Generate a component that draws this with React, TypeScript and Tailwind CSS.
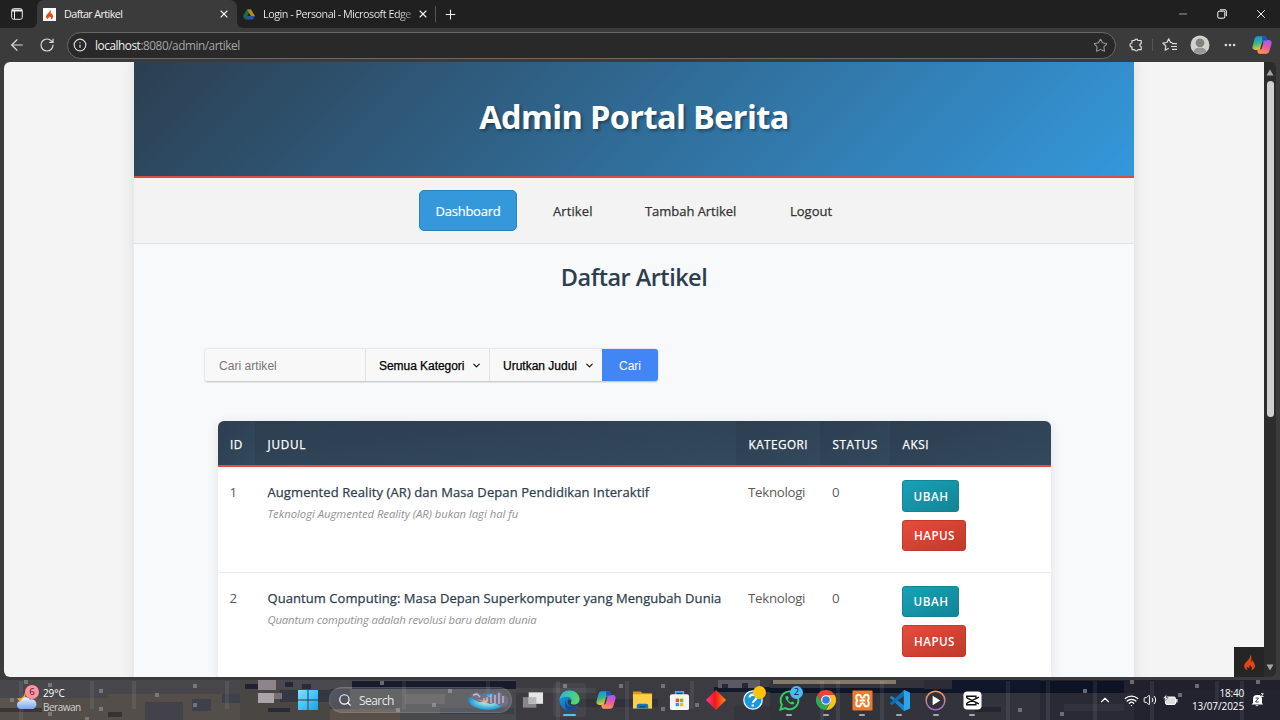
import React from "react";
import { ArrowLeft, RotateCw, Info, Star, Ellipsis, X, Plus, Minus, ChevronDown, ChevronUp, Wifi, Volume2, Search } from "lucide-react";

const UI = "font-['Open_Sans','Noto_Sans',sans-serif]";

function Flame({ className }: { className: string }) {
  return (
    <svg viewBox="0 0 24 24" className={className} fill="#dd4814">
      <path d="M12.5 1c1 3-.3 5-2.4 7.300C7.600 11 4.500 13.200 4.500 17c0 3 2 5.200 5.200 6-1.800-1.700-2-3.700-.8-5.300.3 1.400 1 2 1.900 2.100 1.700-.4.8-2.800 1.900-4.800.3 2 2.900 2.600 2.900 5 0 1.200-.5 2.200-1.500 3 3.600-.7 5.700-3.200 5.700-6.400 0-3.600-2.600-5-3-8.200-.9.9-1.200 1.900-1 3.100-.8-.4-1.300-1.200-1.200-2.300.2-3.200.8-5.900-2.100-8.200z" />
    </svg>
  );
}

function Drive() {
  return (
    <svg viewBox="0 0 24 22" className="h-[11px] w-3">
      <path d="M8 1h8l-8 14-4 6L0 14z" fill="#1a6e3f" />
      <path d="M8 1h8l8 13h-8z" fill="#b98b16" />
      <path d="M4 21l4-7h16l-4 7z" fill="#2a54a2" />
    </svg>
  );
}

function Copilot({ id, className }: { id: string; className: string }) {
  return (
    <svg viewBox="0 0 24 24" className={className}>
      <defs>
        <linearGradient id={id + "a"} x1="0" y1="0" x2=".3" y2="1">
          <stop offset="0" stopColor="#1a8df0" />
          <stop offset=".55" stopColor="#35b58a" />
          <stop offset="1" stopColor="#f2c52c" />
        </linearGradient>
        <linearGradient id={id + "b"} x1=".6" y1="0" x2=".3" y2="1">
          <stop offset="0" stopColor="#a05cf0" />
          <stop offset=".5" stopColor="#ee5a9c" />
          <stop offset="1" stopColor="#ff9a4a" />
        </linearGradient>
      </defs>
      <path d="M7 1.500h8c1.500 0 2 1 2.500 3l.5 2.500h-2.500c-1.500 0-2.200.7-2.600 2l-1.900 6.500c-.5 1.500-1.300 2.500-3 2.500H4c-3 0-4-2-3.300-4.700L3 5C3.700 2.500 5 1.500 7 1.500z" fill={"url(#" + id + "a)"} />
      <path d="M17 22.500H9c-1.500 0-2-1-2.500-3L6 17.500h2.500c1.500 0 2.700-.7 3.100-2l1.900-7c.5-1.500 1.300-2.500 3-2.500H20c3 0 4 2 3.300 4.700L21 19c-.7 2.500-2 3.500-4 3.500z" fill={"url(#" + id + "b)"} />
      <path d="M12 1.500h3c1.500 0 2 1 2.500 3l.5 2h-3c-1.500 0-2.200.7-2.600 2z" fill="#1d50c8" />
      <path d="M13.500 8.500l-1.900 7c-.3 1-1 1.700-2 2l2.700-9.500z" fill="#2c2a35" />
    </svg>
  );
}

function TabBar() {
  return (
    <div className="flex h-7 w-full bg-[#3b3b3b] text-[#f2f2f2]">
      <div className="flex w-[37px] items-center rounded-br-[6px] bg-[#202020] pl-[11px]">
        <svg viewBox="0 0 12 12" className="h-3 w-3" fill="none" stroke="#eee">
          <rect x=".7" y=".7" width="10.600" height="10.600" rx="2" />
          <path d="M1 2.500h10" strokeWidth="2" />
          <path d="M3.500 3v8" />
        </svg>
      </div>
      <div className="w-[200px] bg-[#202020]">
        <div className="flex h-7 items-center rounded-t-[7px] bg-[#3b3b3b] pl-1.5">
          <div className="flex h-[13px] w-[13px] items-center justify-center bg-white">
            <Flame className="h-[11px] w-[11px]" />
          </div>
          <span className="ml-2 w-[148px] text-[10.800px] leading-4 tracking-[-0.6px]">Daftar Artikel</span>
          <X className="ml-1.5 h-[12px] w-[12px]" strokeWidth={2.200} />
        </div>
      </div>
      <div className="flex flex-1 items-center rounded-bl-[6px] bg-[#202020] pl-1.5">
        <Drive />
        <span className="ml-2 w-[149px] whitespace-nowrap bg-gradient-to-r from-[#f2f2f2] from-90% to-[#777] bg-clip-text text-[10.800px] leading-4 tracking-[-0.5px] text-transparent">
          Login - Personal - Microsoft Edge
        </span>
        <X className="ml-[5px] h-[12px] w-[12px]" strokeWidth={2.200} />
        <div className="ml-[6px] h-4 w-px bg-[#555]" />
        <Plus className="ml-[7px] h-[15px] w-[15px]" strokeWidth={1.700} />
        <div className="ml-auto flex items-center pr-3">
          <Minus className="h-3 w-3 text-[#ccc]" strokeWidth={1.500} />
          <svg viewBox="0 0 10 10" className="ml-[28px] h-[10px] w-[10px]" fill="none" stroke="#fff">
            <rect x=".8" y="2.200" width="7" height="7" rx="1.300" />
            <path d="M3 .8h5a1.300 1.300 0 0 1 1.300 1.300v5" />
          </svg>
          <X className="ml-[27px] h-[14px] w-[14px]" strokeWidth={1.700} />
        </div>
      </div>
    </div>
  );
}

function Toolbar() {
  return (
    <div className="flex h-[34px] w-full items-center bg-[#3b3b3b] pl-2 text-[#ddd]">
      <ArrowLeft className="h-[18px] w-[18px]" strokeWidth={1.500} />
      <RotateCw className="ml-[13px] h-[16px] w-[16px]" strokeWidth={1.700} />
      <div className="ml-[12px] flex h-[27px] w-[1049px] items-center rounded-full border border-[#696969] bg-[#292929] pl-[5px] pr-[7px]">
        <Info className="h-[14px] w-[14px]" strokeWidth={2} />
        <span className="ml-[8px] text-[11.800px] leading-4 tracking-[-0.45px] text-[#a6a6a6]"><span className="text-[#f0f0f0]">localhost</span>:8080/admin/artikel</span>
        <Star className="ml-auto h-[15px] w-[15px] text-[#999]" strokeWidth={1.700} />
      </div>
      <svg viewBox="0 0 14 14" className="ml-[13px] h-[14px] w-[14px]" fill="none" stroke="#ddd" strokeWidth="1.200" strokeLinejoin="round">
        <path d="M3 5V2.500h2.600a1.700 1.700 0 0 1 3.300 0h3.300v3.200a1.400 1.400 0 0 0 0 2.800v3.200H8.900a1.700 1.700 0 0 1-3.300 0H3V8.900a1.900 1.900 0 0 1 0-3.900z" />
      </svg>
      <div className="ml-[9px] h-3 w-px bg-[#555]" />
      <svg viewBox="0 0 16 14" className="ml-[9px] h-[14px] w-4" fill="none" stroke="#ddd" strokeWidth="1.200">
        <path d="M10.500 4.700L8.500 4.500 6.700.8 4.900 4.500.8 5.100l3 2.900-.7 4.200 3.600-2M10 5.700h5M9 8.500h6M10 11.300h5" strokeLinejoin="round" />
      </svg>
      <svg viewBox="0 0 20 20" className="ml-3 h-5 w-5">
        <circle cx="10" cy="10" r="9.500" fill="#d4d2cf" />
        <circle cx="10" cy="7.800" r="4.400" fill="#858280" />
        <path d="M3.500 16.500C5 13 7 12.700 10 12.700s5 .3 6.500 3.800A9.500 9.500 0 0 1 3.500 16.500z" fill="#9a9794" />
      </svg>
      <Ellipsis className="ml-[13px] h-[14px] w-[14px]" strokeWidth={2.500} />
      <Copilot id="tb" className="ml-[15px] h-5 w-5" />
    </div>
  );
}

const COLS = "grid grid-cols-[37.500px_481px_84px_70px_160.500px]";

function HeadCell({ label, track }: { label: string; track: string }) {
  return (
    <div className={"flex items-center bg-gradient-to-br from-[#2c3e50] to-[#34495e] pl-[12.500px] pt-px text-[11.700px] font-medium leading-4 text-white [-webkit-text-stroke:0.25px_white] " + track}>{label}</div>
  );
}

const rows = [
  { id: 1, title: "Augmented Reality (AR) dan Masa Depan Pendidikan Interaktif", text: "Teknologi Augmented Reality (AR) bukan lagi hal fu", tt: "tracking-[0.09px]", st: "tracking-[-0.03px]" },
  { id: 2, title: "Quantum Computing: Masa Depan Superkomputer yang Mengubah Dunia", text: "Quantum computing adalah revolusi baru dalam dunia", tt: "tracking-[0.07px]", st: "tracking-[-0.16px]" },
];

function Row({ r }: { r: (typeof rows)[number] }) {
  return (
    <div className={COLS + " h-[105.500px] border-b border-[#e9ecef] bg-white pt-[13px] text-[13.300px] text-[#5b5b5b]"}>
      <div className="pl-3 leading-6">{r.id}</div>
      <div className="whitespace-nowrap pl-[12.500px]">
        <div className={"text-[13px] font-medium leading-6 text-[#2c3e50] [-webkit-text-stroke:0.25px_#2c3e50] " + r.tt}>{r.title}</div>
        <div className={"text-[11.300px] italic leading-5 text-[#929292] " + r.st}>{r.text}</div>
      </div>
      <div className="pl-3 leading-6 tracking-[-0.3px]">Teknologi</div>
      <div className="pl-3 leading-6">0</div>
      <div className="flex flex-col items-start gap-2 pl-[12px] text-[11.700px] font-semibold text-white">
        <div className="flex h-[31.500px] w-[57px] items-center justify-center rounded-[3px] border border-[#138496] bg-gradient-to-br from-[#17a2b8] to-[#138496] pl-px pt-0.5 tracking-[0.55px]">UBAH</div>
        <div className="flex h-[31.500px] w-16 items-center justify-center rounded-[3px] border border-[#c0392b] bg-gradient-to-br from-[#e74c3c] to-[#c0392b] pl-px pt-0.5 tracking-[0.4px]">HAPUS</div>
      </div>
    </div>
  );
}

function Page() {
  return (
    <div className="flex h-[615px] min-w-0 flex-1 justify-center overflow-hidden bg-[#f4f4f4]">
      <div className="flex h-[640px] w-[1000px] shrink-0 flex-col bg-[#f8f9fb] shadow-[0_0_14px_rgba(0,0,0,0.1)]">
        <div className="flex h-[116px] shrink-0 items-center justify-center border-b-2 border-[#dc4c40] bg-[linear-gradient(135deg,#2c3e50,#3498db)] pb-1">
          <h1 className="whitespace-nowrap text-[32.500px] font-bold leading-10 tracking-[-0.63px] text-white [text-shadow:2px_2px_3px_rgba(0,0,0,0.35)]">Admin Portal Berita</h1>
        </div>
        <div className="flex h-[66px] shrink-0 items-center border-b border-[#e2e4e6] bg-[#f3f3f3] pl-[285px] text-[13px] font-medium text-[#333] [-webkit-text-stroke:0.25px_#333]">
          <div className="flex h-[41px] w-[98px] items-center justify-center rounded-[5px] border border-[#2980b9] bg-[#3498db] pt-0.5 tracking-[-0.22px] text-white [-webkit-text-stroke:0.2px_white]">Dashboard</div>
          <div className="ml-[36px] w-[92px] pt-0.5 tracking-[0.1px]">Artikel</div>
          <div className="w-[145px] pt-0.5 tracking-[-0.04px]">Tambah Artikel</div>
          <div className="pt-0.5">Logout</div>
        </div>
        <h2 className="mt-[15px] h-9 text-center text-[23.500px] font-semibold leading-9 tracking-[-0.52px] text-[#2c3e50]">Daftar Artikel</h2>
        <div className="ml-[71px] mt-[54px] flex h-8 w-[453px] overflow-hidden rounded-[3px] font-['Liberation_Sans',sans-serif] text-[12px] shadow-[0_0.5px_2px_rgba(0,0,0,0.25)]">
          <div className="flex w-[161px] items-center border-r border-[#e4e4e4] bg-[#f8f8f8] pl-[14px] pt-px tracking-[0.04px] text-[#757575]">Cari artikel</div>
          <div className="flex w-[124px] items-center justify-between border-r border-[#e4e4e4] bg-[#f8f8f8] pl-[13px] pr-[7px] pt-px text-black">
            <span className="tracking-[-0.05px] [-webkit-text-stroke:0.25px_black]">Semua Kategori</span><ChevronDown className="h-[11px] w-[11px]" strokeWidth={2.300} />
          </div>
          <div className="flex w-[112px] items-center justify-between bg-[#f8f8f8] pl-[13px] pr-[7px] pt-px text-black">
            <span className="[-webkit-text-stroke:0.25px_black]">Urutkan Judul</span><ChevronDown className="h-[11px] w-[11px]" strokeWidth={2.300} />
          </div>
          <div className="flex flex-1 items-center justify-center bg-[#4285f4] pt-px text-white">Cari</div>
        </div>
        <div className="ml-[83.500px] mt-[40px] w-[833px] overflow-hidden rounded-t-[6px] shadow-[0_2px_12px_rgba(0,0,0,0.1)]">
          <div className={COLS + " h-[46px] border-b-2 border-[#e74c3c]"}>
            <HeadCell label="ID" track="tracking-[0.4px]" />
            <HeadCell label="JUDUL" track="tracking-[0.8px]" />
            <HeadCell label="KATEGORI" track="tracking-[0.5px]" />
            <HeadCell label="STATUS" track="tracking-[0.6px]" />
            <HeadCell label="AKSI" track="tracking-[0.6px]" />
          </div>
          {rows.map((r) => <Row key={r.id} r={r} />)}
        </div>
      </div>
    </div>
  );
}

const blocks: [number, number, number, number, string][] = [
  [0, 0, 250, 40, "#544e4b"], [0, 0, 250, 8, "#48474c"], [0, 8, 108, 10, "#48474c"], [0, 18, 42, 12, "#5b544e"], [0, 28, 42, 4, "#3c3631"],
  [108, 8, 132, 6, "#48464b"], [145, 22, 38, 18, "#43424a"], [108, 32, 14, 5, "#37322f"], [192, 19, 19, 12, "#3e414c"], [222, 14, 28, 9, "#3d4048"],
  [240, 0, 90, 40, "#4a4644"], [262, 0, 90, 9, "#4b4850"], [280, 10, 70, 12, "#343844"], [245, 4, 14, 5, "#1d2236"], [258, 0, 18, 10, "#8d858b"], [258, 13, 16, 10, "#aaa3aa"], [274, 13, 8, 6, "#777078"],
  [285, 2, 8, 5, "#242638"], [302, 4, 9, 5, "#292b3a"], [268, 28, 22, 4, "#262c34"], [350, 0, 166, 40, "#48494c"], [352, 1, 164, 8, "#171b2b"], [330, 29, 70, 11, "#5b5049"], [405, 14, 40, 10, "#5a5855"], [440, 28, 74, 6, "#3b3f48"],
  [516, 0, 254, 40, "#3c3b41"], [516, 8, 80, 5, "#47464a"], [568, 19, 90, 8, "#303139"], [714, 7, 60, 5, "#151a2b"], [718, 0, 42, 8, "#5b5a64"], [722, 4, 6, 4, "#242838"], [742, 3, 6, 5, "#242838"], [734, 26, 60, 14, "#35353d"],
  [770, 0, 270, 40, "#33333b"], [770, 8, 270, 5, "#0f1627"], [930, 0, 110, 12, "#10172a"], [773, 0, 123, 4, "#847a6b"], [924, 0, 28, 9, "#2b2c38"], [975, 27, 26, 5, "#24252f"],
  [1040, 0, 240, 40, "#22232e"], [1040, 1, 84, 12, "#0c1324"], [1040, 13, 94, 27, "#292a35"], [1124, 0, 156, 9, "#20212c"], [1064, 24, 60, 7, "#31323d"],
];
const specks = [[24, 0], [10, 18], [48, 32], [48, 3], [99, 9], [99, 27], [155, 13], [193, 4], [193, 23], [85, 37], [380, 1], [432, 23], [448, 9], [396, 28], [563, 4], [619, 4], [661, 4], [661, 27], [695, 23], [1018, 28], [1060, 32], [1083, 9], [1130, 0], [1195, 4], [1178, 13], [1256, 0]];
const streaks = [19, 90, 132, 225, 402, 486, 556, 625, 690, 820, 836, 880, 1006, 1046, 1093, 1150, 1215, 1240];

function Wallpaper() {
  return (
    <svg viewBox="0 0 1280 40" className="absolute inset-0 h-10 w-[1280px]" shapeRendering="crispEdges" aria-hidden="true">
      {blocks.map(([x, y, w, h, c], i) => <rect key={i} x={x} y={y} width={w} height={h} fill={c} />)}
      {streaks.map((x) => <rect key={x} x={x} y="1" width="4" height={x % 3 === 0 ? 28 : 39} fill="#fff" opacity=".07" />)}
      {specks.map(([x, y], i) => <rect key={i} x={x} y={y} width="4" height="4" fill="#8c8a90" opacity=".7" />)}
    </svg>
  );
}

function Slot({ children, dot }: { children: React.ReactNode; dot?: boolean }) {
  return (
    <div className="relative flex h-10 w-[36.630px] items-center justify-center">
      {children}
      {dot && <div className="absolute bottom-[4px] h-[2.500px] w-[6px] rounded-full bg-[#a6a6aa]" />}
    </div>
  );
}

function Taskbar() {
  return (
    <div className="relative h-10 w-full overflow-hidden bg-[#33333b] text-white">
      <Wallpaper />
      <div className="relative flex h-10 items-center">
        <div className="relative ml-4 h-[26px] w-[26px]">
          <svg viewBox="0 0 26 26" className="h-[26px] w-[26px]">
            <defs>
              <linearGradient id="cl" x1="0" y1="0" x2="0" y2="1"><stop offset="0" stopColor="#eef3ff" /><stop offset="1" stopColor="#78a7ec" /></linearGradient>
            </defs>
            <path d="M9 5c-1 5-3 7-8 6 2 4 6 5 9 3z" fill="#f5a623" />
            <path d="M5 22a4 4 0 0 1 0-8 5 5 0 0 1 9-1.500 4.800 4.800 0 0 1 3 9.500z" fill="url(#cl)" />
          </svg>
          <div className="absolute left-[9px] top-[-2px] flex h-[14px] w-[14px] items-center justify-center rounded-full bg-[#ff94a0] text-[9.500px] text-[#402020]">6</div>
        </div>
        <div className="flex w-[90px] flex-col pt-px text-[10px] leading-[13.500px]">
          <span className="ml-px tracking-[-0.1px]">29°C</span>
          <span className="ml-px tracking-[-0.5px] text-[#d2d0ce]">Berawan</span>
        </div>
        <svg viewBox="0 0 20 20" className="ml-[166px] h-5 w-5">
          <defs><linearGradient id="win" x1="0" y1="0" x2="1" y2="1"><stop offset="0" stopColor="#7ee3ff" /><stop offset="1" stopColor="#12a4ee" /></linearGradient></defs>
          <path d="M0 0h9.500v9.500H0zM10.500 0H20v9.500h-9.500zM0 10.500h9.500V20H0zM10.500 10.500H20V20h-9.500z" fill="url(#win)" />
        </svg>
        <div className="ml-[11px] flex h-[26px] w-[183px] items-center rounded-full border border-white/10 bg-white/15 pl-[8px]">
          <Search className="h-[14px] w-[14px]" strokeWidth={2} />
          <span className="ml-[7px] pt-0.5 text-[12px] tracking-[-0.55px] text-[#e6e6e6]">Search</span>
          <svg viewBox="0 0 42 22" className="ml-auto mr-[2px] h-[22px] w-[42px]">
            <defs><radialGradient id="sky"><stop offset="0" stopColor="#ffd0a0" /><stop offset=".35" stopColor="#8ae0e4" /><stop offset="1" stopColor="#168fd8" /></radialGradient></defs>
            <path d="M1 10C6 4 34 2 40 9c2 5-5 11-18 12C9 21 1 15 1 10z" fill="url(#sky)" />
            <path d="M4 6l5-3 5 2 4-1 3 4h3V4l3-2v6l3-4 2-2 3 3v3l3-2 3 3v5l-3 3h-5l-5-3-5 1-5-2-6 0-6-3z" fill="#776f89" />
            <path d="M6 6l4-1 3 3M17 9v4M20 8v5M24 5v9M28 6v8M32 4v11M36 7v7" stroke="#c9c2cf" strokeWidth="1.300" fill="none" />
            <path d="M9 10l8 2 5-2-3 4z" fill="#f0b184" />
          </svg>
        </div>
        <div className="ml-[2.500px] flex">
          <Slot>
            <svg viewBox="0 0 24 18" className="h-[18px] w-[23px]"><path d="M2 6h14v11H2z" fill="#87878a" /><path d="M8 1h15v12H8z" fill="#e5e5e6" /><path d="M8 6h8v7H8z" fill="#b8b8ba" /></svg>
          </Slot>
          <Slot>
            <div className="absolute inset-x-[2px] inset-y-[3px] rounded-[4px] bg-white/5" />
            <svg viewBox="0 0 24 24" className="relative h-[21px] w-[21px]">
              <defs>
                <linearGradient id="e1" x1="0" y1="0" x2="1" y2=".4"><stop offset="0" stopColor="#28b0e8" /><stop offset="1" stopColor="#55d868" /></linearGradient>
                <linearGradient id="e2" x1="0" y1="0" x2="1" y2="1"><stop offset="0" stopColor="#1b9de2" /><stop offset="1" stopColor="#0c54a4" /></linearGradient>
              </defs>
              <circle cx="12" cy="12" r="11.500" fill="url(#e2)" />
              <path d="M.6 11C1.500 4 6 .5 12 .5c7 0 11.500 5 11.500 10 0 4-3 6.300-6.500 6.300-3 0-4.200-1.200-3.200-2.500 2-3-.3-6.600-4.800-6.600C5 7.700 1.500 9 .6 11z" fill="url(#e1)" />
              <path d="M8 12c-1.200 5 4 9 12.500 6.500C18 22 15 23.500 12 23.500 7 22 5.500 16 8 12z" fill="#0d4f9f" />
              <path d="M13.800 14.300c-1 1.300.2 2.500 3.200 2.500 2.500 0 4.600-1 5.900-2.500l.5 1.700c-1.200 1.800-4 3-7.500 2.900-4-.3-6.600-3-6-6.500.6-3 4.400-1.600 3.900 1.900z" fill="#39383e" />
            </svg>
            <div className="absolute bottom-[4px] h-[2.500px] w-[13px] rounded-full bg-[#55c0f3]" />
          </Slot>
          <Slot><Copilot id="tk" className="h-5 w-5" /></Slot>
          <Slot>
            <svg viewBox="0 0 22 20" className="h-5 w-[21px]"><path d="M1 1h8l2 2h10v4H1z" fill="#d99a16" /><path d="M1 4h20v15H1z" fill="#ffcf48" /><path d="M5 19v-3q0-2 2-2h8q2 0 2 2v3z" fill="#1572c0" /><path d="M8 17h6" stroke="#0b4a87" strokeWidth="1.500" /></svg>
          </Slot>
          <Slot>
            <svg viewBox="0 0 22 22" className="h-[21px] w-[21px]"><path d="M7 5V2h8v3" fill="none" stroke="#39b7f1" strokeWidth="1.800" /><rect x="1" y="4.500" width="20" height="16.500" rx="2" fill="#f5f5f5" /><path d="M7 9h3.600v3.600H7z" fill="#ee5024" /><path d="M11.400 9H15v3.600h-3.600z" fill="#7bb72c" /><path d="M7 13.400h3.600V17H7z" fill="#20a2e2" /><path d="M11.400 13.400H15V17h-3.600z" fill="#f8b616" /></svg>
          </Slot>
          <Slot>
            <svg viewBox="0 0 20 20" className="h-5 w-5"><defs><linearGradient id="dm"><stop offset="0" stopColor="#ff3ca0" /><stop offset=".45" stopColor="#f31818" /><stop offset="1" stopColor="#ff8f1c" /></linearGradient></defs><path d="M10 0l10 10-10 10L0 10z" fill="url(#dm)" /></svg>
          </Slot>
          <Slot>
            <svg viewBox="0 0 20 20" className="h-5 w-5"><circle cx="10" cy="10" r="9.200" fill="#1799dc" stroke="#e9f5fb" strokeWidth="1.300" /><path d="M6.500 7.500c.3-4 7.300-3.800 7 .2-.2 2.400-3.400 2.300-3.500 5M9.700 14.600v2" fill="none" stroke="#fff" strokeWidth="2.200" /></svg>
            <div className="absolute left-[19px] top-[6px] h-[13px] w-[13px] rounded-full bg-[#ffc20a]" />
          </Slot>
          <Slot dot>
            <svg viewBox="0 0 22 22" className="h-[21px] w-[21px]" fill="none" stroke="#34d266" strokeWidth="2"><path d="M1.500 20.500L3 15.500A9.300 9.300 0 1 1 6.600 19z" /><path d="M7 6.500c-1.500 3 4.500 9.500 8 8.500 1-.7 1.200-1.500.8-2l-2-1-1.500 1c-1.500-.6-2.500-1.600-3-3l1-1.300L9.200 6.300z" fill="#34d266" stroke="none" /></svg>
            <div className="absolute left-[19px] top-[6px] flex h-[13px] w-[13px] items-center justify-center rounded-full bg-[#4cb9f2] text-[9.500px] text-[#10222e]">2</div>
          </Slot>
          <Slot dot>
            <svg viewBox="0 0 24 24" className="h-5 w-5"><path d="M12 12V6H22.400A12 12 0 0 1 12 24l5.200-9z" fill="#fbc116" /><path d="M1.600 6L6.800 15 12 12V6H22.400A12 12 0 0 0 1.600 6z" fill="#ea4335" /><path d="M1.600 6l5.200 9 5.200 3 5.200-3L12 24A12 12 0 0 1 1.600 6z" fill="#32a853" /><circle cx="12" cy="12" r="5.800" fill="#fff" /><circle cx="12" cy="12" r="4.600" fill="#2f7de8" /></svg>
          </Slot>
          <Slot dot>
            <svg viewBox="0 0 22 22" className="h-[21px] w-[21px]" strokeLinejoin="round">
              <rect x=".5" y=".5" width="21" height="21" rx="1" fill="#ee7b2a" />
              <path d="M9.200 8V7.200A2.300 2.300 0 0 0 4.600 7.200v1.600q0 1.200 1 2.200-1 1-1 2.200v1.600a2.300 2.300 0 0 0 4.600 0V14M12.800 8V7.200a2.300 2.300 0 0 1 4.600 0v1.600q0 1.200-1 2.200 1 1 1 2.200v1.600a2.300 2.300 0 0 1-4.600 0V14M9.200 7.500q1.800 1.300 3.600 0M9.200 14.500q1.800-1.300 3.600 0M8 11h6" fill="none" stroke="#fff" strokeWidth="2" />
            </svg>
          </Slot>
          <Slot dot>
            <svg viewBox="0 0 24 24" className="h-[21px] w-[21px]"><path d="M17 0l7 3v18l-7 3L.8 8.500 3 6.500l14 10.800z" fill="#1684ce" /><path d="M17 0v6.800L3 17.500.8 15.500z" fill="#0c6fb7" /><path d="M17 0l7 3v18l-7 3z" fill="#2ba4ee" /></svg>
          </Slot>
          <Slot dot>
            <svg viewBox="0 0 22 22" className="h-[21px] w-[21px]"><defs><linearGradient id="mp" x1="0" y1="0" x2="0" y2="1"><stop offset="0" stopColor="#f49a52" /><stop offset="1" stopColor="#9d6bd2" /></linearGradient></defs><circle cx="11" cy="11" r="9.800" fill="#343039" stroke="url(#mp)" strokeWidth="1.600" /><path d="M8 6l8 5-8 5z" fill="#fff" /></svg>
          </Slot>
          <Slot dot>
            <svg viewBox="0 0 20 20" className="h-[19px] w-[19px]"><rect x=".5" y=".5" width="19" height="19" rx="4" fill="#fff" /><path d="M16.800 6.500L4 12.700M16.800 13.500L4 7.300M13.500 7V5.500H4V7.300M4 12.700v1.800h9.500V13" fill="none" stroke="#111" strokeWidth="1.600" /></svg>
          </Slot>
        </div>
        <div className="ml-auto flex items-center pr-[16px]">
          <ChevronUp className="h-[14px] w-[14px]" strokeWidth={2} />
          <Wifi className="ml-[12px] h-[15px] w-[15px]" strokeWidth={2} />
          <Volume2 className="ml-1 h-[14px] w-[14px]" strokeWidth={1.700} />
          <svg viewBox="0 0 15 12" className="ml-[6px] h-3 w-[15px]"><rect x="2.500" y="3" width="10" height="7.500" rx="1.500" fill="#ddd" stroke="#fff" /><path d="M13.200 5h1.300v3.500h-1.300z" fill="#fff" /><path d="M3.500 0L0 4.500h2L1 8l4-4.500H3z" fill="#fff" stroke="#22232e" strokeWidth=".5" /></svg>
          <div className="ml-[11px] w-[55px] whitespace-nowrap text-right text-[10px] leading-[13.500px]">
            <div className="tracking-[-0.2px]">18:40</div>
            <div className="tracking-[-0.1px]">13/07/2025</div>
          </div>
          <svg viewBox="0 0 13 14" className="ml-[7px] h-[14px] w-[13px]"><path d="M2 10V6a4 4 0 0 1 4-4h3l2 3v5l1 1.500H.5z" fill="#fff" /><path d="M4.500 12.200q1.500 2 3 0z" fill="#fff" /><path d="M4.500 5h3L4.500 9h3.200" fill="none" stroke="#444654" strokeWidth="1" /><path d="M10 .7h2.300L10.200 3.500h2.300" fill="none" stroke="#fff" strokeWidth=".9" /></svg>
        </div>
      </div>
    </div>
  );
}

export default function App() {
  return (
    <div className={"flex h-[720px] w-[1280px] flex-col overflow-hidden bg-[#3b3b3b] " + UI}>
      <TabBar />
      <Toolbar />
      <div className="h-[618px] px-1">
        <div className="relative flex h-[615px] overflow-hidden rounded-[6px] bg-[#2c2c2c]">
          <Page />
          <div className="flex h-[615px] w-3 flex-col items-center pb-[6px] pt-[7px]">
            <svg viewBox="0 0 8 7" className="h-[7px] w-2"><path d="M4 .5L7.500 6.500h-7z" fill="#a5a5a5" /></svg>
            <div className="mt-[5px] h-[336px] w-[7px] rounded-full bg-[#cfcfcf]" />
            <svg viewBox="0 0 8 7" className="mt-auto h-[7px] w-2"><path d="M4 6.500L.5.500h7z" fill="#a5a5a5" /></svg>
          </div>
          <div className="absolute bottom-0 right-3 flex h-[30px] w-[30px] items-center justify-center bg-[#252525]">
            <Flame className="h-[17px] w-[17px]" />
          </div>
        </div>
      </div>
      <Taskbar />
    </div>
  );
}
